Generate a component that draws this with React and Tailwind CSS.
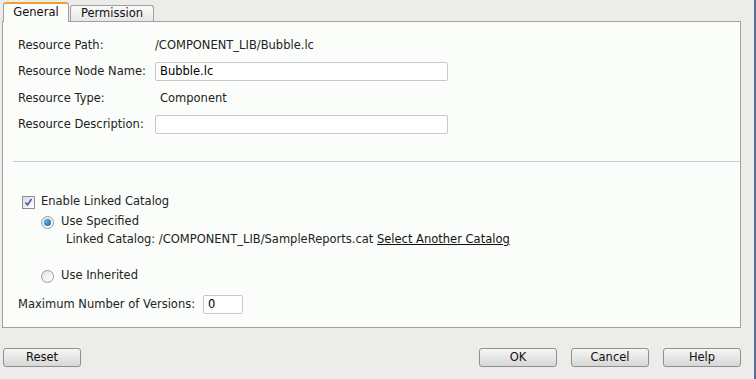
import React from "react";

const font = { fontFamily: '"DejaVu Sans", Verdana, sans-serif' };

function Btn({ children, className = "" }) {
  return (
    <div
      className={
        "h-[19px] w-[78px] rounded-[3px] border border-[#8e8f8f] bg-gradient-to-b from-[#f6f6f6] to-[#d7d7d7] flex items-center justify-center text-[11.5px] text-[#111] " +
        className
      }
    >
      {children}
    </div>
  );
}

function Row({ label, children, className = "" }) {
  return (
    <div className={"flex items-center " + className}>
      <div className="w-[137px] text-[#222] whitespace-nowrap">{label}</div>
      {children}
    </div>
  );
}

function Input({ value = "", w = "w-[293px]" }) {
  return (
    <div
      className={
        "h-[19px] border border-[#c8c8c8] rounded-[2px] bg-white flex items-center px-[4px] text-[#000] " +
        w
      }
    >
      {value}
    </div>
  );
}

function Radio({ checked }) {
  return (
    <div className="w-[13px] h-[13px] rounded-full border border-[#9a9a9a] bg-gradient-to-br from-[#e4e4e4] to-[#ffffff] flex items-center justify-center">
      {checked && (
        <div className="w-[7px] h-[7px] rounded-full bg-[radial-gradient(circle_at_35%_35%,#5bb3e8,#0a5a9a)]" />
      )}
    </div>
  );
}

export default function App() {
  return (
    <div
      className="w-[756px] h-[379px] bg-[#ecece9] relative text-[11.5px] overflow-hidden"
      style={font}
    >
      <div className="absolute right-0 top-0 bottom-0 w-[2px] bg-[#5a6e96]" />
      <div className="pl-[2px] pt-[2px] w-[741px]">
        {/* Tabs */}
        <div className="flex items-end h-[19px] relative z-10">
          <div className="h-[20px] w-[66px] ml-[1px] bg-[#fbfdfa] border border-b-0 border-[#a0a0a0] rounded-t-[3px] border-t-2 border-t-[#f0a030] flex items-center justify-center text-[#111] mb-[-1px]">
            General
          </div>
          <div className="h-[16px] w-[84px] ml-[1px] bg-gradient-to-b from-[#fafafa] to-[#e6e6e6] border border-b-0 border-[#a0a0a0] rounded-t-[3px] flex items-center justify-center text-[#111]">
            Permission
          </div>
        </div>
        {/* Panel */}
        <div className="h-[307px] border border-[#a0a0a0] bg-[#fbfdfa] pt-[15px]">
          <div className="pl-[15px]">
            <Row label="Resource Path:" className="h-[17px]">
              <div className="text-[#222]">/COMPONENT_LIB/Bubble.lc</div>
            </Row>
            <Row label="Resource Node Name:" className="h-[19px] mt-[8px]">
              <Input value="Bubble.lc" />
            </Row>
            <Row label="Resource Type:" className="h-[17px] mt-[9px]">
              <div className="text-[#222] pl-[5px]">Component</div>
            </Row>
            <Row label="Resource Description:" className="h-[19px] mt-[8px]">
              <Input />
            </Row>
          </div>
          <div className="ml-[10px] mt-[27px] h-px bg-[#c9cdd0]" />
          <div className="pl-[19px] mt-[33px]">
            <div className="flex items-center h-[14px]">
              <div className="w-[13px] h-[13px] border border-[#8f8f8f] bg-gradient-to-br from-[#dcdcdc] to-[#ffffff] flex items-center justify-center">
                <svg width="9" height="9" viewBox="0 0 9 9">
                  <path d="M1.5 4.5 L3.5 7 L7.5 1" stroke="#4a55b0" strokeWidth="1.6" fill="none" />
                </svg>
              </div>
              <div className="ml-[6px] text-[#222]">Enable Linked Catalog</div>
            </div>
            <div className="pl-[19px]">
              <div className="flex items-center h-[14px] mt-[6px]">
                <Radio checked />
                <div className="ml-[7px] text-[#222]">Use Specified</div>
              </div>
              <div className="pl-[25px] mt-[3px] h-[15px] flex items-center text-[#222] whitespace-nowrap">
                Linked Catalog: /COMPONENT_LIB/SampleReports.cat&nbsp;
                <span className="underline text-[#111]">Select Another Catalog</span>
              </div>
              <div className="flex items-center h-[14px] mt-[22px]">
                <Radio />
                <div className="ml-[7px] text-[#222]">Use Inherited</div>
              </div>
            </div>
          </div>
          <div className="pl-[15px] mt-[12px] flex items-center h-[19px]">
            <div className="text-[#222] w-[185px] whitespace-nowrap">Maximum Number of Versions:</div>
            <Input value="0" w="w-[40px]" />
          </div>
        </div>
        {/* Buttons */}
        <div className="flex items-center mt-[20px] pl-[1px]">
          <Btn>Reset</Btn>
          <div className="flex-1" />
          <Btn>OK</Btn>
          <Btn className="ml-[14px]">Cancel</Btn>
          <Btn className="ml-[14px]">Help</Btn>
        </div>
      </div>
    </div>
  );
}
